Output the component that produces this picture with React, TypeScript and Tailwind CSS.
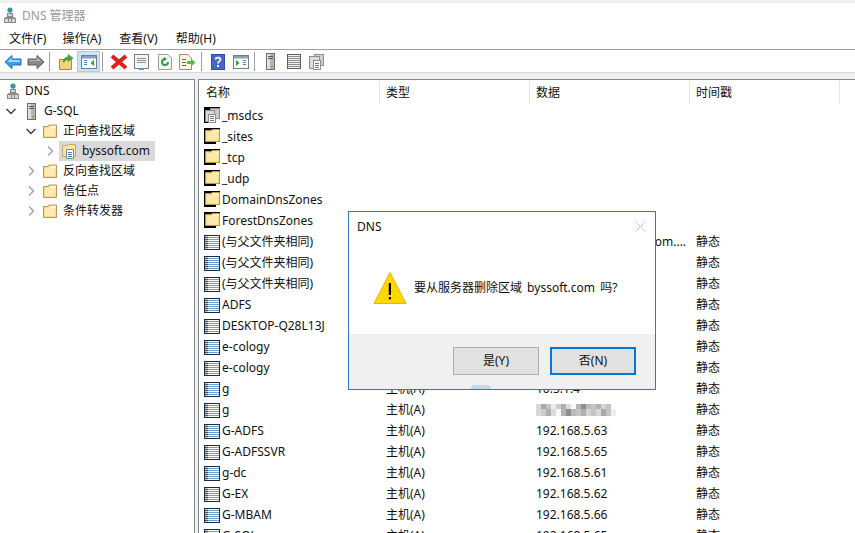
import React from "react";

const F = "font-['Noto_Sans','Noto_Sans_CJK_SC',sans-serif]";

function FolderIcon({ framed = false }: { framed?: boolean }) {
  if (framed) {
    return (
      <svg width="16" height="16" viewBox="0 0 16 16" className="mb-[1px] shrink-0">
        <rect width="16" height="16" fill="#000" />
        <path d="M1.5 2.5H7L8 1.5H15.5V13.5H1.5Z" fill="#f7dc8c" stroke="#b89a52" />
        <path d="M3 4H14V12.5H3Z" fill="#fbe9ac" />
        <path d="M9 2.5H15V4H9Z" fill="#fdf6d8" />
        <rect x="12" y="14" width="4" height="2" fill="#fff" />
      </svg>
    );
  }
  return (
    <svg width="16" height="16" viewBox="0 0 16 16" className="shrink-0">
      <path d="M1.5 3.5H6L7 2H14.5V14.5H1.5Z" fill="#f7dc8c" stroke="#b89a52" />
      <path d="M3 5H13V13H3Z" fill="#fbeab2" />
      <path d="M8 3H14V5H8Z" fill="#fdf6d8" />
    </svg>
  );
}

function ZoneFolderIcon() {
  return (
    <svg width="16" height="16" viewBox="0 0 16 16" className="shrink-0">
      <path d="M1.5 2.5H6L7 1.5H14.5V13.5H1.5Z" fill="#f7e3a6" stroke="#c2a964" />
      <path d="M5.5 6.5H12.5V15.5H5.5Z" fill="#fff" stroke="#7f8a99" />
      <path d="M7 9.5H11M7 11.5H11M7 13.5H11" stroke="#3f7fc0" />
    </svg>
  );
}

function ServerIcon({ className = "" }: { className?: string }) {
  return (
    <svg width="9" height="17" viewBox="0 0 9 17" className={"shrink-0 " + className}>
      <rect x="0.5" y="0.5" width="8" height="16" fill="#b4b4b4" stroke="#6e6e6e" />
      <rect x="1" y="1" width="3" height="15" fill="#e0e0e0" />
      <path d="M2 3.5H7M2 5.5H7" stroke="#555" />
      <rect x="5" y="13" width="2" height="1.5" fill="#67b14a" />
    </svg>
  );
}

function DnsIcon() {
  return (
    <svg width="12" height="16" viewBox="0 0 12 16" className="shrink-0">
      <path d="M6.5 5V11" stroke="#7a7a7a" />
      <circle cx="6" cy="3" r="2.6" fill="#2f8fd6" />
      <path d="M4.5 1.2L7 1.6L6.5 3.6L4.5 4.2Z" fill="#3fa34d" />
      <rect x="3.5" y="6.5" width="5" height="3" fill="#d2d2d2" stroke="#8a8a8a" />
      <path d="M1.5 12V10.5H10.5V12" stroke="#8a8a8a" fill="none" />
      <rect x="0.5" y="11.5" width="11" height="4" fill="#d6d6d6" stroke="#8a8a8a" />
      <path d="M4.5 12V15M7.5 12V15" stroke="#8a8a8a" />
    </svg>
  );
}

function RecordIcon() {
  return (
    <svg width="16" height="15" viewBox="0 0 16 15" className="mt-[2px] shrink-0">
      <rect x="0.5" y="0.5" width="15" height="14" fill="#fff" stroke="#1f2d3d" />
      <rect x="1" y="1" width="3" height="13" fill="#c3ccd6" />
      <path d="M4 2.5H15M4 4.5H15M4 6.5H15M4 8.5H15M4 10.5H15M4 12.5H15" stroke="#6d9fd1" />
      <path d="M1 2.5H4M1 4.5H4M1 6.5H4M1 8.5H4M1 10.5H4M1 12.5H4" stroke="#4a5866" />
    </svg>
  );
}

function MsdcsIcon() {
  return (
    <svg width="16" height="16" viewBox="0 0 16 16" className="mb-[1px] shrink-0">
      <rect width="16" height="16" fill="#000" />
      <rect x="6.5" y="1.5" width="9" height="10" fill="#c9c9c9" stroke="#8e8e8e" />
      <rect x="1.5" y="3.5" width="9" height="11" fill="#d9d9d9" stroke="#8e8e8e" />
      <rect x="4.5" y="7.5" width="7" height="8" fill="#fff" stroke="#8e8e8e" />
      <path d="M6 9.5H10M6 11.5H10M6 13.5H10" stroke="#777" />
      <rect x="12" y="12" width="4" height="4" fill="#fff" />
    </svg>
  );
}

function Chevron({ open }: { open: boolean }) {
  return (
    <svg width="12" height="12" viewBox="0 0 12 12" className="shrink-0">
      {open ? (
        <path d="M1.5 4L6 8.5L10.5 4" fill="none" stroke="#404040" strokeWidth="1.5" />
      ) : (
        <path d="M4 1.5L8.5 6L4 10.5" fill="none" stroke="#a6a6a6" strokeWidth="1.5" />
      )}
    </svg>
  );
}

function TreeRow({
  pad,
  chevron,
  icon,
  label,
  gap = "ml-[5px]",
  selected = false,
}: {
  pad: string;
  chevron?: boolean;
  icon: React.ReactNode;
  label: string;
  gap?: string;
  selected?: boolean;
}) {
  return (
    <div className={"flex h-5 items-center " + pad}>
      {chevron !== undefined && <Chevron open={chevron} />}
      <div
        className={
          "flex h-5 items-center pr-[5px] " + (selected ? "bg-[#d9d9d9] pl-[2px] ml-[3px]" : "ml-[5px]")
        }
      >
        {icon}
        <span className={"whitespace-nowrap " + gap}>{label}</span>
      </div>
    </div>
  );
}

const Back = () => (
  <svg width="18" height="16" viewBox="0 0 18 16">
    <path d="M1 8L8 1.5V5H17V11H8V14.5Z" fill="#3d9df0" stroke="#1c6fb8" />
    <path d="M3 8L8 3.5V6H16V8Z" fill="#a5d5fa" />
  </svg>
);
const Forward = () => (
  <svg width="18" height="16" viewBox="0 0 18 16">
    <path d="M17 8L10 1.5V5H1V11H10V14.5Z" fill="#8a8a8a" stroke="#5a5a5a" />
    <path d="M2 6H10V3.5L14 7H2Z" fill="#b9b9b9" />
  </svg>
);
const UpFolder = () => (
  <svg width="16" height="18" viewBox="0 0 16 18">
    <path d="M1.5 6.5H13.5V16.5H1.5Z" fill="#f3d27a" stroke="#a98a3e" />
    <path d="M5 9C6 5 8 4 10 4V1.5L15 5L10 8.5V6C8 6 7 7 6.5 9Z" fill="#4da83a" stroke="#2f7a22" strokeWidth="0.5" />
  </svg>
);
const PaneToggle = ({ flip = false }: { flip?: boolean }) => (
  <svg width="16" height="14" viewBox="0 0 16 14">
    <rect x="0.5" y="0.5" width="15" height="13" fill="#fff" stroke="#6f7f8f" />
    <rect x="1" y="1" width="14" height="2.5" fill="#8e9fb0" />
    {flip ? (
      <>
        <path d="M3 5L6.5 8L3 11Z" fill="#2f9e44" />
        <path d="M10 5.5H13M10 7.5H13M10 9.5H13" stroke="#4c87c5" />
      </>
    ) : (
      <>
        <path d="M3 5.5H6M3 7.5H6M3 9.5H6" stroke="#4c87c5" />
        <path d="M13 5L9.5 8L13 11Z" fill="#2f9e44" />
      </>
    )}
  </svg>
);
const RedX = () => (
  <svg width="18" height="16" viewBox="0 0 18 16">
    <path d="M2 2L16 14M16 2L2 14" stroke="#e01f1f" strokeWidth="4" />
  </svg>
);
const Props = () => (
  <svg width="15" height="16" viewBox="0 0 15 16">
    <rect x="0.5" y="0.5" width="14" height="14" fill="#f4f4f4" stroke="#7c7c7c" />
    <path d="M3 4.5H12M3 6.5H12M3 8.5H12" stroke="#8a94a0" />
    <rect x="5" y="14" width="5" height="2" fill="#3aa0e0" />
  </svg>
);
const Refresh = () => (
  <svg width="14" height="16" viewBox="0 0 14 16">
    <path d="M0.5 0.5H10L13.5 4V15.5H0.5Z" fill="#f6f6f6" stroke="#9a9a9a" />
    <path d="M10 8A3 3 0 1 1 7 5" fill="none" stroke="#2e9e3a" strokeWidth="2" />
    <path d="M6 3L9 5L6 7Z" fill="#2e9e3a" />
  </svg>
);
const ExportIcon = () => (
  <svg width="17" height="16" viewBox="0 0 17 16">
    <path d="M0.5 0.5H9L12.5 4V15.5H0.5Z" fill="#faf6dc" stroke="#8f8f8f" />
    <path d="M3 5.5H7M3 8.5H7M3 11.5H7" stroke="#666" />
    <path d="M8 7H12V4.5L16.5 8.5L12 12.5V10H8Z" fill="#58b947" />
  </svg>
);
const Help = () => (
  <svg width="14" height="16" viewBox="0 0 14 16">
    <rect width="14" height="16" fill="#2f4fa8" />
    <rect x="1" y="1" width="12" height="14" fill="#4668c4" />
    <path d="M4.5 5.5C4.5 3 9.5 3 9.5 5.5C9.5 7.5 7 7.2 7 9.5" fill="none" stroke="#fff" strokeWidth="1.6" />
    <rect x="6" y="11" width="2" height="2" fill="#fff" />
  </svg>
);
const ListIcon = () => (
  <svg width="14" height="15" viewBox="0 0 14 15">
    <rect x="0.5" y="0.5" width="13" height="14" fill="#f4f4f4" stroke="#5f5f5f" />
    <path d="M1 2.5H13M1 4.5H13M1 6.5H13M1 8.5H13M1 10.5H13M1 12.5H13" stroke="#8a8a8a" />
  </svg>
);
const CopyIcon = () => (
  <svg width="15" height="16" viewBox="0 0 15 16">
    <rect x="5.5" y="0.5" width="9" height="11" fill="#cfcfcf" stroke="#8e8e8e" />
    <rect x="0.5" y="2.5" width="10" height="12" fill="#dddddd" stroke="#8e8e8e" />
    <rect x="4.5" y="6.5" width="7" height="9" fill="#fff" stroke="#8e8e8e" />
    <path d="M6 9.5H10M6 11.5H10M6 13.5H10" stroke="#777" />
  </svg>
);

const Btn = ({ children, active = false }: { children: React.ReactNode; active?: boolean }) => (
  <div
    className={
      "flex h-[21px] w-[23px] items-center justify-center " +
      (active ? "border border-[#99d1ff] bg-[#cce4f7]" : "")
    }
  >
    {children}
  </div>
);
const Sep = () => (
  <div className="flex h-[21px] w-[7px] pl-[2px] py-[1px]">
    <div className="w-px bg-[#a0a0a0]" />
  </div>
);

type Row = { icon: "msdcs" | "folder" | "rec"; name: string; type?: string; data?: string; ts?: string };
const same = "(与父文件夹相同)";
const rows: Row[] = [
  { icon: "msdcs", name: "_msdcs" },
  { icon: "folder", name: "_sites" },
  { icon: "folder", name: "_tcp" },
  { icon: "folder", name: "_udp" },
  { icon: "folder", name: "DomainDnsZones" },
  { icon: "folder", name: "ForestDnsZones" },
  { icon: "rec", name: same, type: "起始授权机构(SOA)", data: "[1234], g-dc.byssoft.com....", ts: "静态" },
  { icon: "rec", name: same, type: "名称服务器(NS)", data: "g-dc.byssoft.com.", ts: "静态" },
  { icon: "rec", name: same, type: "主机(A)", data: "192.168.5.61", ts: "静态" },
  { icon: "rec", name: "ADFS", type: "主机(A)", data: "192.168.5.63", ts: "静态" },
  { icon: "rec", name: "DESKTOP-Q28L13J", type: "主机(A)", data: "192.168.5.70", ts: "静态" },
  { icon: "rec", name: "e-cology", type: "主机(A)", data: "192.168.5.71", ts: "静态" },
  { icon: "rec", name: "e-cology", type: "主机(A)", data: "192.168.5.72", ts: "静态" },
  { icon: "rec", name: "g", type: "主机(A)", data: "10.5.1.4", ts: "静态" },
  { icon: "rec", name: "g", type: "主机(A)", data: "mosaic", ts: "静态" },
  { icon: "rec", name: "G-ADFS", type: "主机(A)", data: "192.168.5.63", ts: "静态" },
  { icon: "rec", name: "G-ADFSSVR", type: "主机(A)", data: "192.168.5.65", ts: "静态" },
  { icon: "rec", name: "g-dc", type: "主机(A)", data: "192.168.5.61", ts: "静态" },
  { icon: "rec", name: "G-EX", type: "主机(A)", data: "192.168.5.62", ts: "静态" },
  { icon: "rec", name: "G-MBAM", type: "主机(A)", data: "192.168.5.66", ts: "静态" },
  { icon: "rec", name: "G-SQL", type: "主机(A)", data: "192.168.5.65", ts: "静态" },
];

const mosaicColors = [
  "#d8d8d8", "#a8a8a8", "#c4c4c4", "#ededed", "#d0ccc8", "#aeaeae", "#dcdcdc", "#f8f8f8",
  "#b4b4b4", "#8e8e8e", "#bcbcbc", "#c8c4c0", "#b0b0b0", "#d4d4d4", "#c0c4c8",
];
const Mosaic = () => (
  <svg width="80" height="12" viewBox="0 0 80 12" className="block">
    {mosaicColors.map((c, i) => (
      <rect key={i} x={i * 5} y="0" width="5" height="12" fill={c} />
    ))}
    {mosaicColors.map((c, i) => (
      <rect key={"b" + i} x={(i + 1) * 5} y="5" width="5" height="7" fill={mosaicColors[(i + 4) % 15]} />
    ))}
  </svg>
);

const Warning = () => (
  <svg width="34" height="34" viewBox="0 0 34 34" className="shrink-0">
    <path d="M17 1.5L33 32.5H1Z" fill="#ffd800" stroke="#e9b500" strokeLinejoin="round" />
    <rect x="15.8" y="12" width="2.2" height="12" fill="#000" />
    <rect x="15.8" y="26" width="2.2" height="2.4" fill="#000" />
  </svg>
);

export default function App() {
  return (
    <div className={"relative flex h-[533px] w-[855px] flex-col overflow-hidden bg-white text-[12px] leading-none text-[#111] " + F}>
      <div className="h-[3px] shrink-0 bg-[#f0f0f0]" />
      <div className="flex h-[24px] shrink-0 items-center gap-[6px] pl-[4px] text-[#9a9a9a]">
        <DnsIcon />
        <span className="pt-[1px]">DNS 管理器</span>
      </div>
      <div className="flex h-[22px] shrink-0 items-center pt-[1px] pl-[1px]">
        <span className="px-2 whitespace-nowrap">文件(F)</span>
        <span className="px-2 whitespace-nowrap">操作(A)</span>
        <span className="ml-[2px] px-2 whitespace-nowrap">查看(V)</span>
        <span className="ml-[2px] px-2 whitespace-nowrap">帮助(H)</span>
      </div>
      <div className="flex h-[23px] shrink-0 items-end border-t border-[#a0a0a0] pl-[1px]">
        <Btn><Back /></Btn>
        <Btn><Forward /></Btn>
        <Sep />
        <Btn><UpFolder /></Btn>
        <Btn active><PaneToggle /></Btn>
        <Sep />
        <Btn><RedX /></Btn>
        <Btn><Props /></Btn>
        <Btn><Refresh /></Btn>
        <Btn><ExportIcon /></Btn>
        <Sep />
        <Btn><Help /></Btn>
        <Btn><PaneToggle flip /></Btn>
        <Sep />
        <Btn><ServerIcon /></Btn>
        <Btn><ListIcon /></Btn>
        <Btn><CopyIcon /></Btn>
      </div>
      <div className="h-[7px] shrink-0 border-t border-[#d8d8d8] bg-[#f0f0f0]" />
      <div className="flex min-h-0 flex-1 bg-[#f0f0f0]">
        <div className="w-[195px] shrink-0 border-t border-r border-[#828790] bg-white pt-[1px]">
          <TreeRow pad="pl-[2px]" icon={<DnsIcon />} label="DNS" gap="ml-[6px]" />
          <TreeRow pad="pl-[5px]" chevron icon={<div className="ml-[5px]"><ServerIcon /></div>} label="G-SQL" gap="ml-[8px]" />
          <TreeRow pad="pl-[25px]" chevron icon={<FolderIcon />} label="正向查找区域" />
          <TreeRow pad="pl-[44px]" chevron={false} icon={<ZoneFolderIcon />} label="byssoft.com" selected />
          <TreeRow pad="pl-[25px]" chevron={false} icon={<FolderIcon />} label="反向查找区域" />
          <TreeRow pad="pl-[25px]" chevron={false} icon={<FolderIcon />} label="信任点" />
          <TreeRow pad="pl-[25px]" chevron={false} icon={<FolderIcon />} label="条件转发器" />
        </div>
        <div className="ml-[3px] flex-1 overflow-hidden border-t border-l border-[#828790] bg-white">
          <div className="grid h-[25px] grid-cols-[181px_150px_160px_150px]">
            {["名称", "类型", "数据", "时间戳"].map((h, i) => (
              <div key={h} className={"my-[1px] flex items-center border-r border-[#e5e5e5] pt-[1px] " + (i === 0 ? "pl-[7px]" : "pl-[6px]")}>
                {h}
              </div>
            ))}
          </div>
          {rows.map((r, i) => (
            <div key={i} className="grid h-[21px] grid-cols-[181px_150px_160px_150px] items-center">
              <div className="flex items-center gap-[2px] pl-[5px] whitespace-nowrap">
                {r.icon === "msdcs" ? <MsdcsIcon /> : r.icon === "folder" ? <FolderIcon framed /> : <RecordIcon />}
                <span>{r.name}</span>
              </div>
              <div className="pl-[6px] whitespace-nowrap">{r.type}</div>
              <div className="pl-[6px] whitespace-nowrap">{r.data === "mosaic" ? <Mosaic /> : r.data}</div>
              <div className="pl-[6px]">{r.ts}</div>
            </div>
          ))}
        </div>
      </div>

      <div className="absolute left-[348px] top-[211px] flex h-[179px] w-[308px] flex-col border border-[#2b7cc4] bg-white">
        <div className="flex h-[29px] shrink-0 items-center justify-between pl-[8px] pr-[9px]">
          <span>DNS</span>
          <svg width="11" height="11" viewBox="0 0 11 11">
            <path d="M0.5 0.5L10.5 10.5M10.5 0.5L0.5 10.5" stroke="#cfcfcf" />
          </svg>
        </div>
        <div className="flex flex-1 items-center pl-[24px]">
          <Warning />
          <span className="ml-[7px] whitespace-nowrap [word-spacing:2px]">要从服务器删除区域 byssoft.com 吗?</span>
        </div>
        <div className="flex h-[55px] shrink-0 items-start justify-end gap-[11px] bg-[#f0f0f0] pt-[13px] pr-[19px]">
          <button className="h-[28px] w-[86px] border border-[#adadad] bg-[#e1e1e1]">是(Y)</button>
          <button className="h-[28px] w-[86px] border-2 border-[#0078d7] bg-[#e1e1e1]">否(N)</button>
        </div>
        <div className="absolute bottom-0 left-[122px] h-[4px] w-[20px] rounded-t-[4px] bg-[#c5d8e8]" />
      </div>
    </div>
  );
}
